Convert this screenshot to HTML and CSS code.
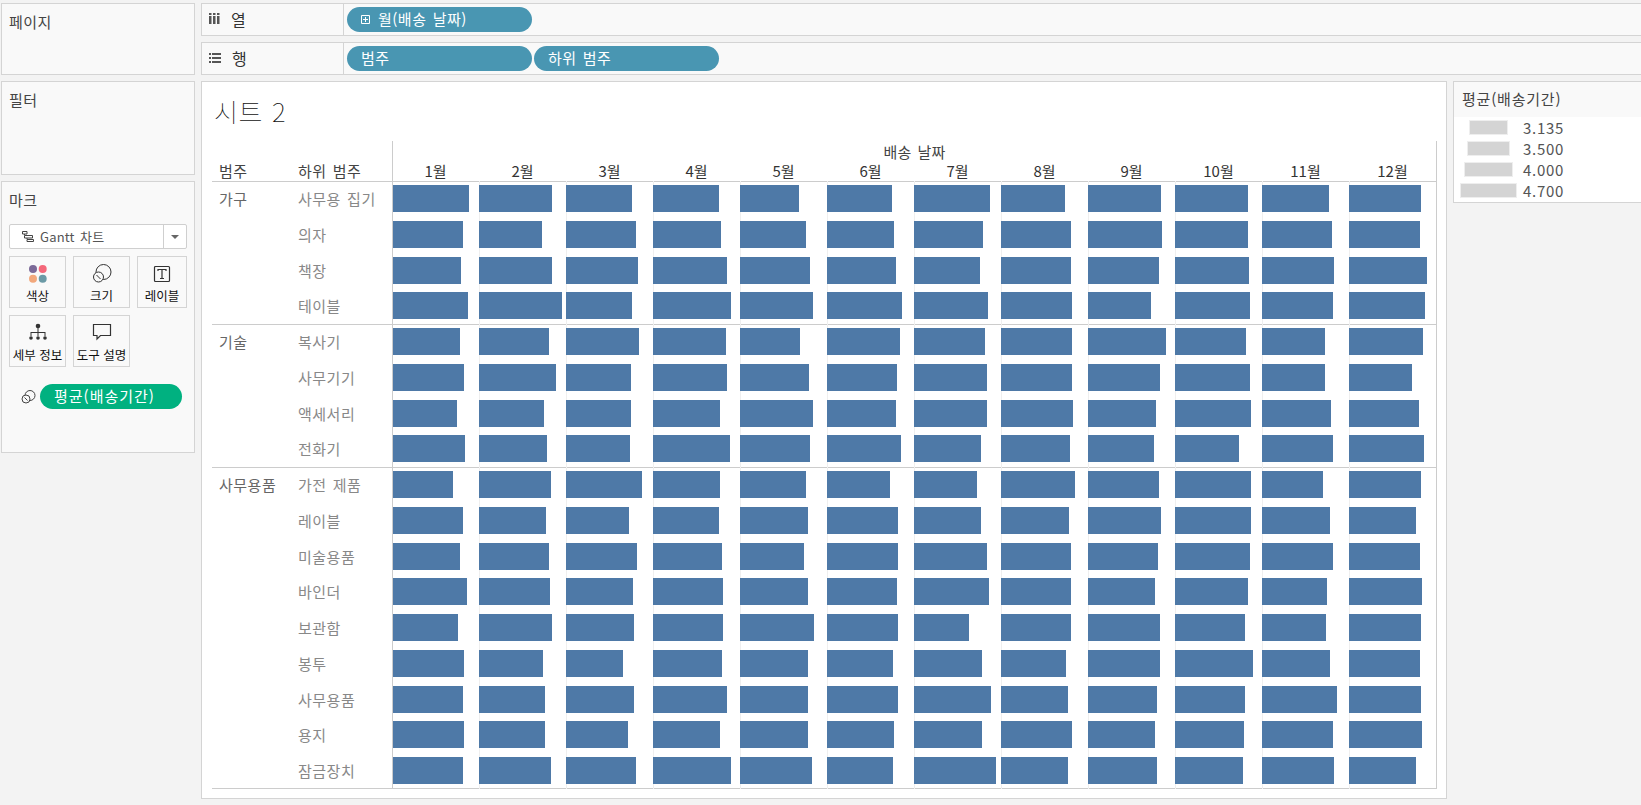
FILE: index.html
```html
<!DOCTYPE html>
<html lang="ko">
<head>
    <meta charset="UTF-8">
    <meta name="viewport" content="width=device-width, initial-scale=1.0">
    <title>시트 2</title>
    <link rel="stylesheet" href="styles.css">
</head>
<body>
    <div class="app">
        <div class="side">
            <div class="panel panel-page"><div class="panel-title">페이지</div></div>
            <div class="panel panel-filter"><div class="panel-title">필터</div></div>
            <div class="panel panel-marks">
                <div class="panel-title marks-title">마크</div>
                <div class="mark-select">
                    <svg class="gantt-icon" width="12" height="11" viewBox="0 0 12 11" fill="none" stroke="#444">
                        <path d="M.5.5h4.5v2.500h-4.500zM2.500 3v1M2.500 4.500h8v2.500h-8zM5 7v1M5 8.500h6.500v2h-6.500z"/>
                    </svg>
                    <span class="mark-select-text">Gantt 차트</span>
                    <span class="mark-select-arrow"><i></i></span>
                </div>
                <div class="mark-buttons">
                    <div class="mark-btn">
                        <svg width="20" height="20" viewBox="0 0 20 20">
                            <circle cx="5" cy="5" r="4" fill="#7b6a98"/>
                            <circle cx="14.7" cy="5" r="4" fill="#f4687a"/>
                            <circle cx="5" cy="14.7" r="4" fill="#f2a87c"/>
                            <circle cx="14.7" cy="14.7" r="4" fill="#6b9aa6"/>
                        </svg>
                        <span>색상</span>
                    </div>
                    <div class="mark-btn">
                        <svg width="20" height="20" viewBox="0 0 20 20" fill="none" stroke="#333">
                            <circle cx="11.5" cy="8" r="7.5"/>
                            <circle cx="6.5" cy="13" r="5" fill="#f9f9f9"/>
                            <path d="M4.5 11l4 4"/>
                        </svg>
                        <span>크기</span>
                    </div>
                    <div class="mark-btn">
                        <svg width="20" height="20" viewBox="0 0 20 20" fill="none" stroke="#333">
                            <rect x="2.500" y="2.500" width="15" height="15" rx="1" stroke-width="1.2"/>
                            <path d="M6 7V5.500h8V7M10 5.500v9M8 14.500h4" stroke-width="1.2"/>
                        </svg>
                        <span>레이블</span>
                    </div>
                    <div class="mark-btn">
                        <svg width="20" height="20" viewBox="0 0 20 20" fill="#333">
                            <circle cx="10" cy="3" r="2.300"/>
                            <path d="M9.500 4h1v5h-1zM2.500 9h15v1h-15zM2.500 9h1v4h-1zM9.500 9h1v4h-1zM16.500 9h1v4h-1z"/>
                            <circle cx="3" cy="15" r="1.800"/>
                            <circle cx="10" cy="15" r="1.800"/>
                            <circle cx="17" cy="15" r="1.800"/>
                        </svg>
                        <span>세부 정보</span>
                    </div>
                    <div class="mark-btn">
                        <svg width="20" height="20" viewBox="0 0 20 20" fill="none" stroke="#333" stroke-width="1.2">
                            <path d="M1.500 1.500h17v11h-10l-3.500 3.500v-3.500h-3.500z"/>
                        </svg>
                        <span>도구 설명</span>
                    </div>
                </div>
                <div class="mark-field">
                    <svg width="15" height="14" viewBox="0 0 15 14" fill="none" stroke="#444">
                        <circle cx="9" cy="5.500" r="5"/>
                        <circle cx="5" cy="9" r="4" fill="#f9f9f9"/>
                        <path d="M3.500 7.500l3 3"/>
                    </svg>
                    <div class="pill pill-green">평균(배송기간)</div>
                </div>
            </div>
        </div>

        <div class="main">
            <div class="shelf">
                <div class="shelf-label">
                    <svg width="11" height="11" viewBox="0 0 11 11" fill="#555">
                        <path d="M0 0h2.500v2H0zM0 3h2.500v8H0zM4 0h2.500v2H4zM4 3h2.500v8H4zM8 0h2.500v2H8zM8 3h2.500v8H8z"/>
                    </svg>
                    <span>열</span>
                </div>
                <div class="pills">
                    <div class="pill">
                        <svg class="plus-icon" width="9" height="9" viewBox="0 0 9 9" fill="none" stroke="#fff">
                            <path d="M.5.5h8v8h-8zM4.500 2v5M2 4.500h5"/>
                        </svg>
                        월(배송 날짜)
                    </div>
                </div>
            </div>
            <div class="shelf">
                <div class="shelf-label">
                    <svg width="12" height="11" viewBox="0 0 12 11" fill="#555">
                        <path d="M0 1h2v2H0zM3 1h9v2H3zM0 5h2v2H0zM3 5h9v2H3zM0 9h2v2H0zM3 9h9v2H3z"/>
                    </svg>
                    <span>행</span>
                </div>
                <div class="pills">
                    <div class="pill">범주</div>
                    <div class="pill">하위 범주</div>
                </div>
            </div>

            <div class="content">
                <div class="sheet">
                    <div class="sheet-title">시트 2</div>
                    <div class="viz">
                        <div class="viz-head">
                            <div class="head-label head-cat">범주</div>
                            <div class="head-label head-sub">하위 범주</div>
                            <div class="head-axis">
                                <div class="axis-title">배송 날짜</div>
                                <div class="cells" id="months"></div>
                            </div>
                        </div>
                        <div id="chart"></div>
                    </div>
                </div>

                <div class="legend">
                    <div class="legend-title">평균(배송기간)</div>
                    <div class="legend-row"><div class="swatch-cell"><div class="swatch sw-1"></div></div><span>3.135</span></div>
                    <div class="legend-row"><div class="swatch-cell"><div class="swatch sw-2"></div></div><span>3.500</span></div>
                    <div class="legend-row"><div class="swatch-cell"><div class="swatch sw-3"></div></div><span>4.000</span></div>
                    <div class="legend-row"><div class="swatch-cell"><div class="swatch sw-4"></div></div><span>4.700</span></div>
                </div>
            </div>
        </div>
    </div>

    <script src="chart.js"></script>
</body>
</html>
```

FILE: styles.css
```css
* {
    box-sizing: border-box;
}

html, body {
    margin: 0;
    height: 100%;
    overflow: hidden;
}

body {
    font-family: "Noto Sans CJK KR", "Noto Sans", sans-serif;
    font-size: 15px;
    letter-spacing: 0.5px;
    word-spacing: 1.5px;
    color: #444;
    background: #f3f3f3;
}

.app {
    display: grid;
    grid-template-columns: 194px 1fr;
    column-gap: 6px;
    padding: 3px 0 0 1px;
}

.side {
    display: flex;
    flex-direction: column;
    gap: 6px;
}

.panel {
    background: #f9f9f9;
    border: 1px solid #d4d4d4;
    padding: 8px 7px;
}

.panel-page {
    height: 72px;
}

.panel-filter {
    height: 94px;
}

.panel-marks {
    height: 272px;
}

.panel-title {
    line-height: 20px;
}

.marks-title {
    margin-bottom: 14px;
}

/* marks card */
.mark-select {
    display: flex;
    align-items: center;
    height: 25px;
    width: 178px;
    background: #fff;
    border: 1px solid #cfcfcf;
    border-radius: 2px;
    font-size: 13px;
    letter-spacing: 0.2px;
}

.gantt-icon {
    margin-left: 12px;
}

.mark-select-text {
    margin-left: 6px;
    flex: 1;
    color: #555;
}

.mark-select-arrow {
    width: 23px;
    height: 100%;
    border-left: 1px solid #cfcfcf;
    display: flex;
    align-items: center;
    justify-content: center;
}

.mark-select-arrow i {
    border-left: 4px solid transparent;
    border-right: 4px solid transparent;
    border-top: 4px solid #666;
}

.mark-buttons {
    display: grid;
    grid-template-columns: 57px 57px 50px;
    grid-auto-rows: 52px;
    column-gap: 7px;
    row-gap: 7px;
    margin-top: 7px;
}

.mark-btn {
    display: flex;
    flex-direction: column;
    align-items: center;
    border: 1px solid #d4d4d4;
    padding-top: 7px;
    font-size: 12.5px;
    letter-spacing: 0;
    word-spacing: 0;
    color: #111;
    white-space: nowrap;
}

.mark-btn span {
    margin-top: 3px;
    line-height: 17px;
}

.mark-field {
    display: flex;
    align-items: center;
    gap: 4px;
    margin-top: 17px;
    padding-left: 12px;
}

/* shelves */
.main {
    display: flex;
    flex-direction: column;
    gap: 6px;
    margin-right: -1px;
}

.shelf {
    display: flex;
    height: 33px;
    background: #f9f9f9;
    border: 1px solid #d4d4d4;
}

.shelf-label {
    display: flex;
    align-items: center;
    gap: 11px;
    width: 142px;
    padding-left: 7px;
    border-right: 1px solid #d4d4d4;
    padding-bottom: 2px;
    font-size: 16px;
    color: #333;
}

.pills {
    display: flex;
    gap: 2px;
    padding: 3px 0 0 3px;
}

.pill {
    display: flex;
    align-items: center;
    width: 185px;
    height: 25px;
    padding: 0 14px 3px;
    border-radius: 13px;
    background: #4996b2;
    color: #fff;
    white-space: nowrap;
}

.plus-icon {
    margin: 2px 8px 0 0;
}

.pill-green {
    width: 142px;
    background: #00b180;
    letter-spacing: 1px;
}

/* sheet */
.content {
    display: flex;
    gap: 6px;
    align-items: flex-start;
}

.sheet {
    width: 1246px;
    height: 718px;
    flex: none;
    padding: 0 9px 0 10px;
    background: #fff;
    border: 1px solid #d4d4d4;
}

.sheet-title {
    height: 59px;
    display: flex;
    align-items: center;
    padding: 0 0 2px 2px;
    font-size: 26px;
    font-weight: 100;
    letter-spacing: 0.5px;
    color: #111;
}

.viz-head {
    display: flex;
    height: 40px;
}

.head-label {
    align-self: flex-end;
    line-height: 20px;
}

.head-cat {
    width: 86px;
    padding-left: 7px;
}

.head-sub {
    width: 94px;
}

.head-axis {
    width: 1045px;
    border-left: 1px solid #ccc;
    border-right: 1px solid #ccc;
}

.axis-title {
    height: 20px;
    line-height: 21px;
    text-align: center;
    letter-spacing: 0.2px;
}

.cells {
    display: grid;
    grid-template-columns: repeat(12, 87px);
}

.head-axis .cells {
    margin-left: -1px;
}

.month {
    line-height: 20px;
    text-align: center;
    letter-spacing: 0;
    color: #333;
}

.section {
    display: flex;
    box-shadow: inset 0 1px 0 #ccc;
}

.section:last-child {
    box-shadow: inset 0 1px 0 #ccc, inset 0 -1px 0 #ccc;
}

.cat {
    width: 86px;
    padding-left: 7px;
    line-height: 36px;
    color: #666;
}

.row {
    display: flex;
    height: 35.75px;
}

.sub {
    width: 94px;
    line-height: 36px;
    color: #888;
}

.row .cells {
    width: 1045px;
    border-right: 1px solid #ccc;
}

.cell {
    padding-top: 4px;
    background: linear-gradient(#efefef, #efefef) left top / 1px 100% no-repeat;
}

.cell:first-child {
    border-left: 1px solid #ccc;
    background: none;
}

.bar {
    height: 27px;
    background: #4e79a7;
}

/* legend */
.legend {
    flex: 1;
    height: 122px;
    background: #fff;
    border: 1px solid #d4d4d4;
}

.legend-title {
    height: 35px;
    padding: 0 0 3px 8px;
    display: flex;
    align-items: center;
    background: #f9f9f9;
    letter-spacing: 0.8px;
}

.legend-row {
    display: flex;
    align-items: center;
    height: 21px;
    color: #555;
    letter-spacing: 0.7px;
}

.swatch-cell {
    display: flex;
    justify-content: center;
    width: 58px;
    margin: 0 6px 0 5px;
}

.swatch {
    height: 15px;
    background: #d4d4d4;
    border: 1px solid #eee;
}

.sw-1 { width: 39px; }
.sw-2 { width: 43px; }
.sw-3 { width: 49px; }
.sw-4 { width: 57px; }
```

FILE: chart.js
```js
const months = ['1월', '2월', '3월', '4월', '5월', '6월', '7월', '8월', '9월', '10월', '11월', '12월'];

// bar width in px for each month
const sections = [
    {
        name: '가구',
        rows: [
            ['사무용 집기', [76, 73, 66, 66, 59, 65, 76, 64, 73, 73, 67, 72]],
            ['의자', [70, 63, 70, 68, 66, 67, 69, 70, 74, 73, 70, 71]],
            ['책장', [68, 73, 72, 74, 70, 69, 66, 70, 71, 74, 72, 78]],
            ['테이블', [75, 83, 66, 78, 73, 75, 74, 71, 63, 75, 71, 76]]
        ]
    },
    {
        name: '기술',
        rows: [
            ['복사기', [67, 70, 73, 73, 60, 73, 71, 71, 78, 71, 63, 74]],
            ['사무기기', [71, 77, 65, 74, 69, 70, 73, 71, 72, 75, 63, 63]],
            ['액세서리', [64, 65, 65, 67, 73, 69, 73, 72, 68, 76, 69, 70]],
            ['전화기', [72, 68, 64, 77, 70, 74, 67, 69, 66, 64, 71, 75]]
        ]
    },
    {
        name: '사무용품',
        rows: [
            ['가전 제품', [60, 72, 76, 67, 66, 63, 63, 74, 71, 76, 61, 72]],
            ['레이블', [70, 67, 63, 66, 68, 71, 67, 68, 73, 76, 68, 67]],
            ['미술용품', [67, 70, 71, 69, 64, 71, 73, 70, 70, 75, 71, 71]],
            ['바인더', [74, 71, 67, 70, 68, 70, 75, 70, 67, 73, 65, 73]],
            ['보관함', [65, 73, 68, 70, 74, 71, 55, 70, 72, 70, 64, 72]],
            ['봉투', [71, 64, 57, 69, 68, 66, 68, 65, 72, 78, 68, 71]],
            ['사무용품', [70, 66, 68, 74, 68, 71, 77, 67, 69, 70, 75, 72]],
            ['용지', [71, 66, 62, 67, 68, 67, 68, 71, 67, 69, 71, 73]],
            ['잠금장치', [70, 72, 70, 78, 72, 66, 82, 67, 69, 68, 72, 67]]
        ]
    }
];

function el(className, text) {
    const node = document.createElement('div');
    node.className = className;
    if (text) {
        node.textContent = text;
    }
    return node;
}

const monthRow = document.getElementById('months');
months.forEach(month => monthRow.appendChild(el('month', month)));

const chart = document.getElementById('chart');
sections.forEach(section => {
    const box = el('section');
    box.appendChild(el('cat', section.name));

    const rows = el('rows');
    section.rows.forEach(([name, widths]) => {
        const row = el('row');
        row.appendChild(el('sub', name));

        const cells = el('cells');
        widths.forEach(width => {
            const cell = el('cell');
            const bar = el('bar');
            bar.style.width = `${width}px`;
            cell.appendChild(bar);
            cells.appendChild(cell);
        });
        row.appendChild(cells);
        rows.appendChild(row);
    });
    box.appendChild(rows);
    chart.appendChild(box);
});
```
